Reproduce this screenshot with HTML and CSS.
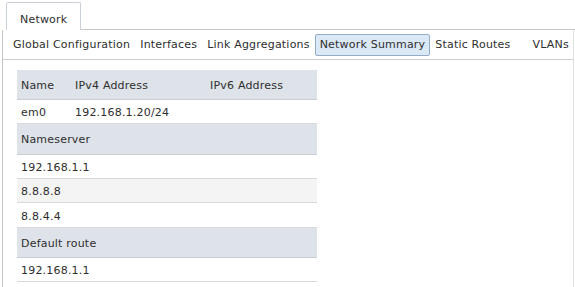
FILE: index.html
```html
<!DOCTYPE html>
<html>
<head>
<meta charset="utf-8">
<link rel="stylesheet" href="styles.css">
</head>
<body>
<div class="tabs">
  <div class="tab">Network</div>
  <div class="tab-fill"></div>
</div>
<div class="panel">
  <div class="subnav">
    <span class="sub">Global Configuration</span>
    <span class="sub">Interfaces</span>
    <span class="sub">Link Aggregations</span>
    <span class="sub active">Network Summary</span>
    <span class="sub">Static Routes</span>
    <span class="sub vlans">VLANs</span>
  </div>
  <div class="summary">
    <div class="line head cols"><span>Name</span><span>IPv4 Address</span><span>IPv6 Address</span></div>
    <div class="line row cols"><span>em0</span><span>192.168.1.20/24</span><span></span></div>
    <div class="line head tall">Nameserver</div>
    <div class="line row">192.168.1.1</div>
    <div class="line row alt">8.8.8.8</div>
    <div class="line row">8.8.4.4</div>
    <div class="line head mid">Default route</div>
    <div class="line row">192.168.1.1</div>
  </div>
</div>
</body>
</html>
```
FILE: styles.css
```css
html, body {
  margin: 0;
  padding: 0;
  background: #fff;
}
body {
  font-family: "DejaVu Sans", Verdana, sans-serif;
  font-size: 11px;
  letter-spacing: 0.2px;
  color: #2e2e2e;
  width: 575px;
  height: 287px;
  overflow: hidden;
}
.tabs {
  display: flex;
  padding-top: 2px;
  padding-left: 6px;
  height: 28px;
}
.tab {
  width: 75px;
  height: 28px;
  border: 1px solid #c9d0d8;
  border-bottom: none;
  border-radius: 2px 2px 0 0;
  box-sizing: border-box;
  padding: 10px 0 0 13px;
  line-height: 13px;
  background: #fff;
}
.tab-fill {
  flex: 1;
  border-bottom: 1px solid #c8c8c8;
  height: 27px;
}
.panel {
  margin-left: 2px;
  margin-right: 1px;
  border-left: 1px solid #c4c4c4;
  border-right: 1px solid #e0e0e0;
  height: 257px;
}
.subnav {
  display: flex;
  align-items: center;
  height: 29px;
  padding-left: 5px;
  border-bottom: 1px solid #cfcfcf;
}
.sub {
  display: block;
  padding: 0 4px;
  height: 20px;
  line-height: 20px;
  border: 1px solid transparent;
  border-radius: 2px;
  white-space: nowrap;
}
.sub.active {
  background: #dbe8f6;
  border-color: #93adc9;
}
.sub.vlans {
  margin-left: 12px;
}
.summary {
  margin: 10px 0 0 14px;
  width: 300px;
}
.line {
  display: flex;
  align-items: center;
  box-sizing: border-box;
  padding-left: 4px;
  padding-top: 1px;
  white-space: nowrap;
}
.cols {
  display: grid;
  grid-template-columns: 54px 135px 111px;
  padding-left: 0;
}
.cols span {
  padding-left: 4px;
}
.head {
  background: #dee3e9;
  height: 30px;
  border-bottom: 1px solid #c9ced4;
}
.head.tall {
  height: 31px;
}
.row {
  height: 24px;
  padding-top: 2px;
  border-bottom: 1px solid #d9d9d9;
}
.row.alt {
  background: #f4f4f4;
}
.summary .line:nth-child(6) {
  height: 25px;
}
```
